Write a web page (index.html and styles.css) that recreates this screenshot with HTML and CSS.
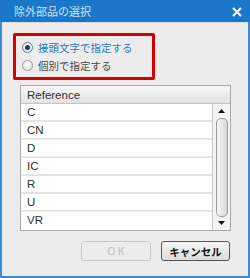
FILE: index.html
```html
<!DOCTYPE html>
<html>
<head>
<meta charset="utf-8">
<link rel="stylesheet" href="styles.css">
</head>
<body>
<div class="window">
  <div class="titlebar">
    <span class="title">除外部品の選択</span>
    <svg class="close" width="10" height="10" viewBox="0 0 10 10"><path d="M1 1 L9 9 M9 1 L1 9" stroke="#ffffff" stroke-width="2"/></svg>
  </div>
  <div class="content">
    <div class="options">
      <div class="opt active"><span class="radio checked"></span><span>接頭文字で指定する</span></div>
      <div class="opt"><span class="radio"></span><span>個別で指定する</span></div>
    </div>
    <div class="listbox">
      <div class="header">Reference</div>
      <div class="body">
        <div class="rows">
          <div class="row">C</div>
          <div class="row">CN</div>
          <div class="row">D</div>
          <div class="row">IC</div>
          <div class="row">R</div>
          <div class="row">U</div>
          <div class="row last">VR</div>
        </div>
        <div class="scrollbar">
          <div class="arrow"><svg width="7" height="4" viewBox="0 0 7 4"><path d="M0 4 L3.5 0 L7 4 Z" fill="#111"/></svg></div>
          <div class="thumb"></div>
          <div class="arrow"><svg width="7" height="4" viewBox="0 0 7 4"><path d="M0 0 L7 0 L3.5 4 Z" fill="#111"/></svg></div>
        </div>
      </div>
    </div>
    <div class="buttons">
      <div class="btn disabled">O K</div>
      <div class="btn cancel">キャンセル</div>
    </div>
  </div>
</div>
</body>
</html>
```
FILE: styles.css
```css
* { box-sizing: border-box; }
html, body { margin: 0; padding: 0; }
body {
  width: 250px;
  height: 278px;
  font-family: "Noto Sans CJK JP", "Liberation Sans", sans-serif;
  background: #ffffff;
}
.window {
  width: 250px;
  height: 278px;
  display: flex;
  flex-direction: column;
  background: #3a8ad6;
}
.titlebar {
  height: 22px;
  display: flex;
  align-items: center;
  justify-content: space-between;
  padding: 0 8px 0 14px;
  background: #1a77c9;
}
.title {
  color: #cfe2f6;
  font-size: 11px;
  line-height: 14px;
}
.close { display: block; margin-top: 1px; }
.content {
  flex: 1;
  margin: 0 2px 2px 2px;
  background: #ececec;
  border-top: 1px solid #d9d9d9;
  padding: 10px 0 0 0;
  display: flex;
  flex-direction: column;
}
.options {
  margin-left: 11px;
  width: 142px;
  height: 47px;
  border: 3px solid #d60000;
  border-radius: 2px;
  padding: 2px 0 0 6px;
  display: flex;
  flex-direction: column;
}
.opt {
  height: 18px;
  display: flex;
  align-items: center;
  gap: 5px;
  font-size: 10.5px;
  color: #4a4a4a;
}
.opt.active { color: #2f78c2; }
.radio {
  width: 11px;
  height: 11px;
  border-radius: 50%;
  border: 1px solid #9a9a9a;
  background: radial-gradient(circle at 50% 35%, #ffffff, #dcdcdc);
  display: flex;
  align-items: center;
  justify-content: center;
}
.radio.checked { border-color: #5c7fa6; }
.radio.checked::after {
  content: "";
  width: 5px;
  height: 5px;
  border-radius: 50%;
  background: #1d3c66;
}
.listbox {
  margin: 5px 0 0 18px;
  width: 211px;
  border: 1px solid #a8a8a8;
  background: #ffffff;
  display: flex;
  flex-direction: column;
}
.header {
  height: 18px;
  padding-left: 6px;
  font-family: "Liberation Sans", sans-serif;
  font-size: 11.5px;
  line-height: 18px;
  color: #303030;
  background: linear-gradient(#f7f7f7, #e2e2e2);
  border-bottom: 1px solid #c4c4c4;
}
.body {
  display: flex;
  height: 126px;
}
.rows {
  flex: 1;
  display: flex;
  flex-direction: column;
}
.row {
  height: 18px;
  padding-left: 6px;
  font-family: "Liberation Sans", sans-serif;
  font-size: 11.5px;
  line-height: 17px;
  color: #303030;
  border-bottom: 2px solid #e4e4e4;
}
.row.last { border-bottom: none; }
.scrollbar {
  width: 18px;
  border-left: 1px solid #c8c8c8;
  background: #f4f4f4;
  display: flex;
  flex-direction: column;
  align-items: center;
}
.arrow {
  height: 14px;
  display: flex;
  align-items: center;
  justify-content: center;
}
.arrow svg { display: block; }
.thumb {
  flex: 1;
  width: 12px;
  margin: 0 0 -1px 0;
  border: 1px solid #9c9c9c;
  border-radius: 5px;
  background: linear-gradient(90deg, #f8f8f8, #e4e4e4 60%, #d6d6d6);
}
.buttons {
  margin-top: 10px;
  padding-right: 18px;
  display: flex;
  justify-content: flex-end;
  gap: 10px;
}
.btn {
  height: 20px;
  width: 70px;
  border-radius: 3px;
  display: flex;
  align-items: center;
  justify-content: center;
  font-size: 12px;
}
.btn.disabled {
  border: 1px solid #c8c8c8;
  background: #ececec;
  color: #bcbcbc;
  font-family: "Liberation Sans", sans-serif;
  font-size: 10px;
}
.btn.cancel {
  width: 69px;
  border: 1px solid #555555;
  background: linear-gradient(#f6f6f6, #dcdcdc);
  color: #111111;
  font-size: 10.5px;
  font-weight: bold;
}
```
